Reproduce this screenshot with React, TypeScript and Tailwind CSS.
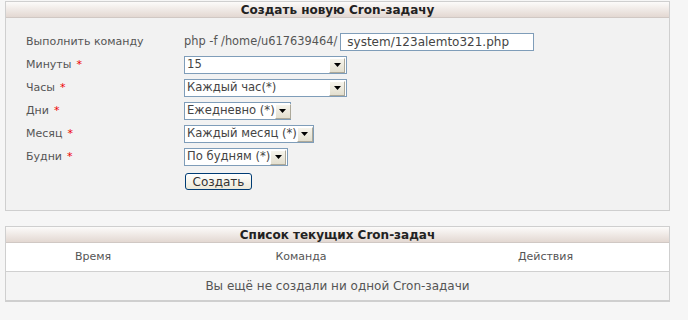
const font = { fontFamily: '"DejaVu Sans", Verdana, sans-serif' };

function Arrow() {
  return (
    <span className="ml-auto flex h-[15px] w-[16px] flex-none items-center justify-center border border-t-[#fff] border-l-[#fff] border-r-[#aca899] border-b-[#aca899] bg-gradient-to-b from-[#f6f4ec] to-[#e3dfcf]">
      <svg width="7" height="4" viewBox="0 0 7 4">
        <path d="M0 0h7L3.5 4z" fill="#000" />
      </svg>
    </span>
  );
}

function Select({ value, width }: { value: string; width: string }) {
  return (
    <div
      className={`flex h-[18px] items-center border border-[#7f9db9] bg-white pl-[2px] pr-px text-[11.6px] text-[#444] ${width}`}
    >
      <span className="whitespace-nowrap leading-none">{value}</span>
      <Arrow />
    </div>
  );
}

function Row({ label, req, children }: { label: string; req?: boolean; children: React.ReactNode }) {
  return (
    <div className="flex items-center">
      <div className="w-[158px] text-[11px] text-[#555]">
        {label}
        {req && <span className="ml-[5px] text-[#e00]">*</span>}
      </div>
      {children}
    </div>
  );
}

function Header({ title }: { title: string }) {
  return (
    <div className="flex h-[16px] items-center justify-center border-b border-[#d0c8c4] bg-gradient-to-b from-[#fcfbfa] to-[#e3d8d2] text-[12px] font-bold text-[#222]">
      {title}
    </div>
  );
}

export default function App() {
  return (
    <div className="h-[320px] w-[688px] bg-[#f6f6f6] pt-px" style={font}>
      <div className="ml-[5px] w-[665px] border border-[#cfcfcf] bg-[#f2f2f2]">
        <Header title="Создать новую Cron-задачу" />
        <div className="flex flex-col gap-[5px] pb-[20px] pl-[20px] pt-[15px]">
          <Row label="Выполнить команду">
            <span className="text-[11.4px] text-[#555]">php -f /home/u617639464/</span>
            <div className="ml-[3px] flex h-[18px] w-[194px] items-center border border-[#7f9db9] bg-white pl-[6px] text-[12px] text-[#444]">
              system/123alemto321.php
            </div>
          </Row>
          <Row label="Минуты" req>
            <Select value="15" width="w-[163px]" />
          </Row>
          <Row label="Часы" req>
            <Select value="Каждый час(*)" width="w-[163px]" />
          </Row>
          <Row label="Дни" req>
            <Select value="Ежедневно (*)" width="w-[107px]" />
          </Row>
          <Row label="Месяц" req>
            <Select value="Каждый месяц (*)" width="w-[130px]" />
          </Row>
          <Row label="Будни" req>
            <Select value="По будням (*)" width="w-[104px]" />
          </Row>
          <Row label="">
            <button className="ml-px mt-[2px] h-[17px] w-[67px] rounded-[3px] border border-[#003c74] bg-gradient-to-b from-[#ffffff] to-[#ece9d8] text-[12px] leading-none text-[#333]">
              Создать
            </button>
          </Row>
        </div>
      </div>

      <div className="ml-[5px] mt-[15px] w-[665px] border border-b-2 border-[#cfcfcf] bg-[#f2f2f2]">
        <Header title="Список текущих Cron-задач" />
        <div className="grid h-[29px] grid-cols-[174px_242px_1fr] items-center border-b border-[#d0d0d0] bg-white text-center text-[11px] text-[#555]">
          <span>Время</span>
          <span>Команда</span>
          <span>Действия</span>
        </div>
        <div className="flex h-[28px] items-center justify-center bg-[#f4f4f4] text-[12px] text-[#555]">
          Вы ещё не создали ни одной Cron-задачи
        </div>
      </div>
    </div>
  );
}
